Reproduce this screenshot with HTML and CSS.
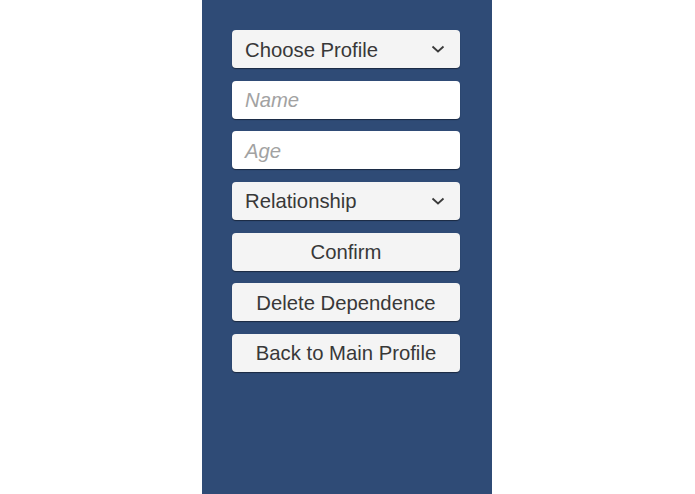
FILE: index.html
```html
<!DOCTYPE html>
<html>
<head>
<meta charset="utf-8">
<link rel="stylesheet" href="styles.css">
</head>
<body>
<div class="page">
  <div class="panel">
    <div class="form">
      <div class="field select"><span class="label">Choose Profile</span><svg class="chev" width="14" height="8" viewBox="0 0 14 8"><path d="M1.5 1.5 L7 6.5 L12.5 1.5" fill="none" stroke="#3a3a3a" stroke-width="1.8"/></svg></div>
      <div class="field input"><span class="placeholder">Name</span></div>
      <div class="field input"><span class="placeholder">Age</span></div>
      <div class="field select"><span class="label">Relationship</span><svg class="chev" width="14" height="8" viewBox="0 0 14 8"><path d="M1.5 1.5 L7 6.5 L12.5 1.5" fill="none" stroke="#3a3a3a" stroke-width="1.8"/></svg></div>
      <div class="field button"><span class="label">Confirm</span></div>
      <div class="field button"><span class="label">Delete Dependence</span></div>
      <div class="field button"><span class="label">Back to Main Profile</span></div>
    </div>
  </div>
</div>
</body>
</html>
```
FILE: styles.css
```css
html, body {
  margin: 0;
  padding: 0;
  background: #ffffff;
}
.page {
  width: 695px;
  height: 494px;
  display: flex;
  overflow: hidden;
}
.panel {
  margin-left: 202px;
  width: 290px;
  height: 494px;
  background: #2f4b76;
  box-sizing: border-box;
  padding: 30px 0 0 30px;
}
.form {
  width: 228px;
  display: flex;
  flex-direction: column;
  gap: 12.67px;
}
.field {
  height: 38px;
  box-sizing: border-box;
  border-radius: 4px;
  background: #f4f4f4;
  box-shadow: 0 1px 1px rgba(0, 0, 0, 0.45);
  display: flex;
  align-items: center;
  font-family: "Liberation Sans", Arial, sans-serif;
  font-size: 20.3px;
  color: #383838;
}
.select {
  justify-content: space-between;
  padding: 2px 15px 0 13px;
}
.select .chev {
  margin-top: -2px;
}
.input {
  background: #ffffff;
  padding: 2px 13px 0 13px;
}
.button {
  justify-content: center;
  padding-top: 2px;
}
.placeholder {
  font-style: italic;
  color: #a2a2a2;
}
.chev {
  display: block;
}
```
